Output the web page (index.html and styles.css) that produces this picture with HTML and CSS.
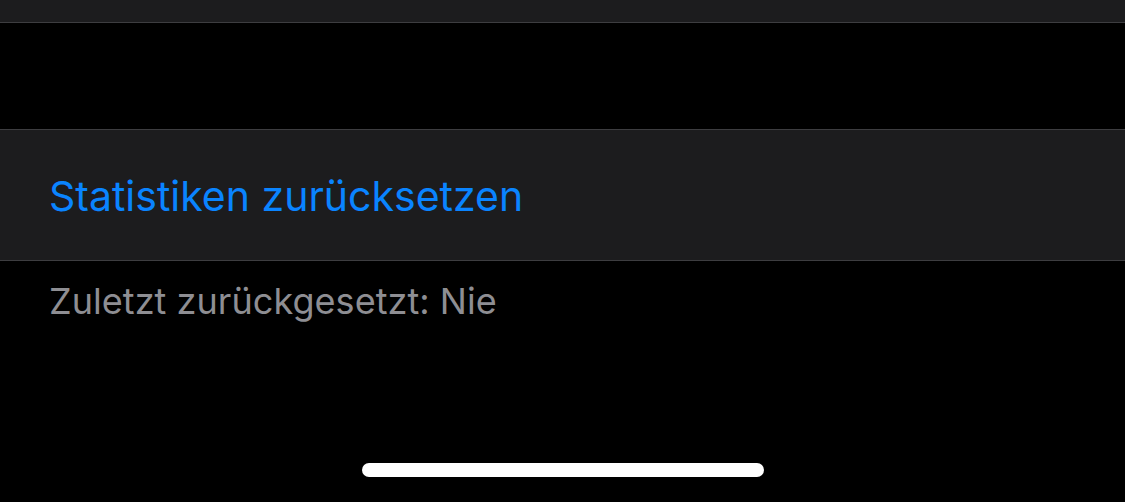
FILE: index.html
```html
<!DOCTYPE html>
<html lang="de">
<head>
<meta charset="utf-8">
<link rel="stylesheet" href="styles.css">
</head>
<body>
<div class="screen">
  <div class="group-top"></div>
  <div class="spacer"></div>
  <div class="group">
    <div class="cell"><span class="action">Statistiken zurücksetzen</span></div>
  </div>
  <div class="footer">Zuletzt zurückgesetzt: Nie</div>
  <div class="home-indicator"></div>
</div>
</body>
</html>
```

FILE: styles.css
```css
html, body {
  margin: 0;
  padding: 0;
  background: #000;
}
.screen {
  position: relative;
  width: 1125px;
  height: 502px;
  overflow: hidden;
  background: #000;
  font-family: Inter, "Noto Sans", sans-serif;
}
.group-top {
  height: 22px;
  background: #1c1c1e;
  border-bottom: 1px solid #3d3d40;
}
.spacer {
  height: 106px;
}
.group {
  background: #1c1c1e;
  border-top: 1px solid #3d3d40;
  border-bottom: 1px solid #3d3d40;
}
.cell {
  height: 130px;
  display: flex;
  align-items: center;
  padding-left: 49px;
}
.action {
  color: #0a84ff;
  font-size: 41px;
  letter-spacing: 0;
  line-height: 1;
  margin-top: 2px;
}
.footer {
  padding: 18px 0 0 49px;
  color: #8e8e93;
  font-size: 36px;
  line-height: 44px;
  letter-spacing: 0.05px;
}
.home-indicator {
  position: absolute;
  left: 362px;
  top: 463px;
  width: 402px;
  height: 14px;
  border-radius: 7px;
  background: #fff;
}
```
